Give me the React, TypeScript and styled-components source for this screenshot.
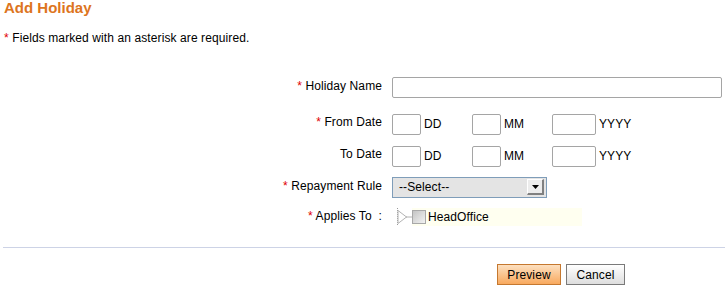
import React from "react";
import styled, { createGlobalStyle } from "styled-components";

const GlobalStyle = createGlobalStyle`
  body {
    margin: 0;
    background: #fff;
    font-family: "Liberation Sans", Arial, sans-serif;
    font-size: 12px;
    letter-spacing: 0.1px;
    color: #000;
  }
`;

const Page = styled.div`
  padding: 0 0 0 4px;
  width: 721px;
`;

const Title = styled.h2`
  margin: 0;
  height: 16px;
  line-height: 15px;
  font-size: 15px;
  font-weight: bold;
  letter-spacing: 0;
  color: #dd7420;
`;

const Note = styled.p`
  margin: 15px 0 0;
  line-height: 14px;
`;

const Star = styled.span`
  color: #e00000;
`;

const Form = styled.div`
  display: flex;
  flex-direction: column;
  margin-top: 30px;
`;

const Row = styled.div<{ $mt?: number }>`
  display: flex;
  align-items: center;
  height: 24px;
  margin-top: ${(p) => p.$mt ?? 0}px;
`;

const Label = styled.div`
  flex: 0 0 388px;
  box-sizing: border-box;
  padding: 0 10px 3px 0;
  text-align: right;
`;

const TextInput = styled.input<{ $w: number }>`
  box-sizing: border-box;
  width: ${(p) => p.$w}px;
  height: 21px;
  margin: 0;
  padding: 1px 3px;
  border: 1px solid #a5a5a5;
  border-radius: 2px;
  font-family: inherit;
  font-size: 12px;
  outline: none;
`;

const DateUnit = styled.div`
  display: flex;
  align-items: center;
  gap: 3px;
  width: 80px;
  padding-top: 2px;
`;

const Select = styled.div`
  box-sizing: border-box;
  width: 155px;
  height: 21px;
  border: 1px solid #7f9db9;
  background: #e4e4e4;
  display: flex;
  align-items: center;
  justify-content: space-between;
  padding: 0 2px 0 6px;
`;

const SelectArrow = styled.div`
  box-sizing: border-box;
  width: 17px;
  height: 16px;
  background: #ececec;
  border-top: 1px solid #fff;
  border-left: 1px solid #fff;
  border-right: 2px solid #808080;
  border-bottom: 2px solid #808080;
  display: flex;
  align-items: center;
  justify-content: center;
`;

const TreeRow = styled.div`
  display: flex;
  align-items: center;
  margin-left: 4px;
`;

const TreeNode = styled.div`
  display: flex;
  align-items: center;
  gap: 2px;
  width: 170px;
  height: 18px;
  background: #fffff0;
`;

const Check = styled.span`
  box-sizing: border-box;
  width: 14px;
  height: 14px;
  border: 1px solid #a8a8a8;
  background: linear-gradient(135deg, #c4c4c4, #f2f2f2);
`;

const Divider = styled.hr`
  margin: 18px 0 0 -1px;
  border: 0;
  border-top: 1px solid #cdd3e6;
  height: 0;
`;

const Actions = styled.div`
  display: flex;
  gap: 5px;
  padding-left: 493px;
  margin-top: 16px;
`;

const Button = styled.button<{ $primary?: boolean }>`
  box-sizing: border-box;
  height: 21px;
  padding: 0 9px;
  font-family: inherit;
  font-size: 12px;
  letter-spacing: 0.1px;
  color: #000;
  border: 1px solid ${(p) => (p.$primary ? "#c5782f" : "#7a7a7a")};
  background: ${(p) =>
    p.$primary
      ? "linear-gradient(#fde0c0, #f8a95e)"
      : "linear-gradient(#ffffff, #dedede)"};
  min-width: ${(p) => (p.$primary ? 64 : 59)}px;
`;

const DateField = () => (
  <>
    <DateUnit>
      <TextInput $w={29} />
      DD
    </DateUnit>
    <DateUnit>
      <TextInput $w={29} />
      MM
    </DateUnit>
    <DateUnit>
      <TextInput $w={44} />
      YYYY
    </DateUnit>
  </>
);

export default function App() {
  return (
    <Page>
      <GlobalStyle />
      <Title>Add Holiday</Title>
      <Note>
        <Star>*</Star> Fields marked with an asterisk are required.
      </Note>
      <Form>
        <Row>
          <Label>
            <Star>*</Star> Holiday Name
          </Label>
          <TextInput $w={330} />
        </Row>
        <Row $mt={12}>
          <Label>
            <Star>*</Star> From Date
          </Label>
          <DateField />
        </Row>
        <Row $mt={8}>
          <Label>To Date</Label>
          <DateField />
        </Row>
        <Row $mt={8}>
          <Label>
            <Star>*</Star> Repayment Rule
          </Label>
          <Select>
            --Select--
            <SelectArrow>
              <svg width="7" height="4" viewBox="0 0 7 4">
                <path d="M0 0h7L3.5 4z" fill="#000" />
              </svg>
            </SelectArrow>
          </Select>
        </Row>
        <Row $mt={6}>
          <Label>
            <Star>*</Star> Applies To&nbsp;&nbsp;:
          </Label>
          <TreeRow>
            <svg width="16" height="20" viewBox="0 0 16 20">
              <path d="M1.5 1v18" stroke="#9a9a9a" strokeDasharray="1 1" />
              <path d="M2 3.5l8.5 6.5-8.5 6.5z" fill="#fff" stroke="#b4b4b4" />
              <path d="M10.5 10h5.5" stroke="#666" strokeDasharray="1 1" />
            </svg>
            <TreeNode>
              <Check />
              HeadOffice
            </TreeNode>
          </TreeRow>
        </Row>
      </Form>
      <Divider />
      <Actions>
        <Button $primary>Preview</Button>
        <Button>Cancel</Button>
      </Actions>
    </Page>
  );
}
